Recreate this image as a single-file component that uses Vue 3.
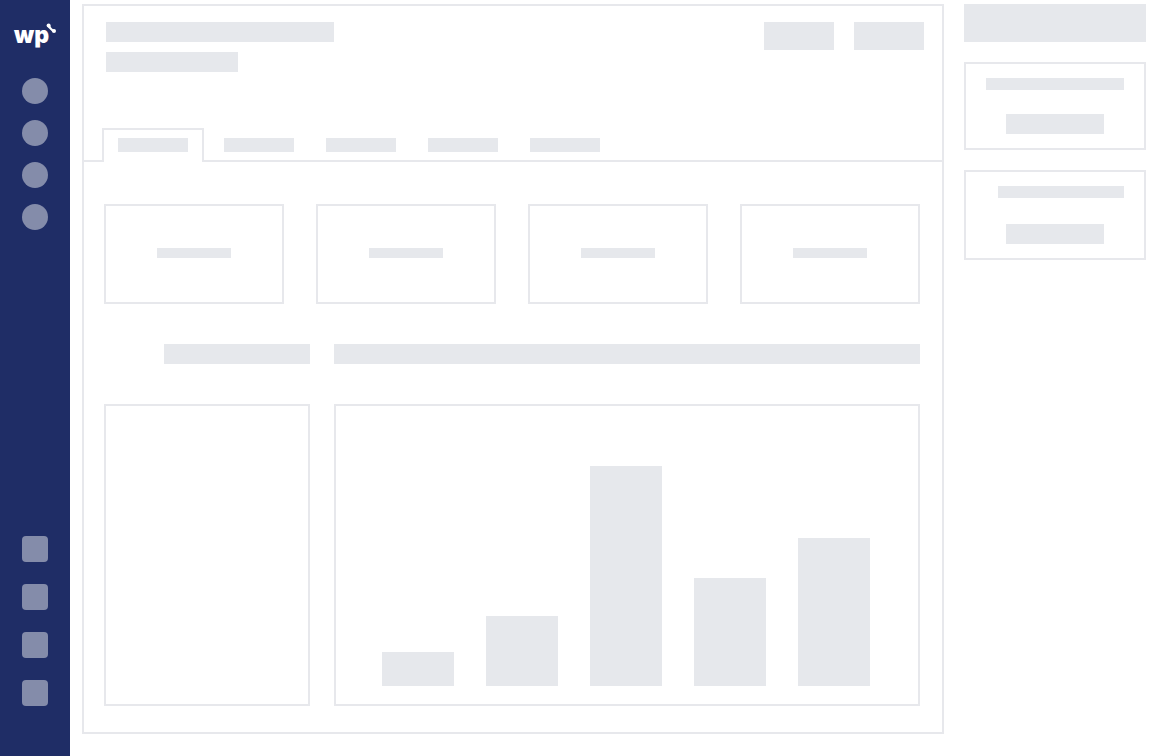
<script setup>
const tabs = [0, 1, 2, 3, 4]
const bars = [34, 70, 220, 108, 148]
</script>

<template>
  <div class="layout" aria-busy="true">
    <nav class="sidebar">
      <svg class="logo" viewBox="0 0 46 32" role="img" aria-label="wp">
        <text x="2" y="23" class="logo-text">wp</text>
        <path d="M35.8 7.2 L40.9 12.2 L42.4 9.8 Q39.4 9 38 5.2 Z" fill="#fff" />
        <circle cx="36.6" cy="5.6" r="2" fill="#fff" />
        <circle cx="42" cy="11" r="2" fill="#fff" />
      </svg>
      <ul class="menu">
        <li v-for="n in 4" :key="n" class="dot"></li>
      </ul>
      <ul class="menu tools">
        <li v-for="n in 4" :key="n" class="square"></li>
      </ul>
    </nav>

    <main class="main">
      <header class="header">
        <div class="titles">
          <div class="fill title"></div>
          <div class="fill subtitle"></div>
        </div>
        <div class="actions">
          <div class="fill action"></div>
          <div class="fill action"></div>
        </div>
      </header>

      <div class="tabs">
        <div v-for="t in tabs" :key="t" class="tab" :class="{ active: t === 0 }">
          <div class="fill tab-label"></div>
        </div>
      </div>

      <div class="content">
        <section class="cards">
          <div v-for="n in 4" :key="n" class="box card">
            <div class="fill card-label"></div>
          </div>
        </section>
        <section class="columns">
          <div class="fill heading short"></div>
          <div class="fill heading"></div>
          <div class="box panel"></div>
          <div class="box panel chart">
            <div v-for="(h, i) in bars" :key="i" class="fill bar" :style="{ height: h + 'px' }"></div>
          </div>
        </section>
      </div>
    </main>

    <aside class="aside">
      <div class="fill banner"></div>
      <div class="box widget">
        <div class="fill line"></div>
        <div class="fill cta"></div>
      </div>
      <div class="box widget second">
        <div class="fill line"></div>
        <div class="fill cta"></div>
      </div>
    </aside>
  </div>
</template>

<style>
body {
  margin: 0;
  background: #fff;
}
</style>

<style scoped>
.layout,
.layout * {
  box-sizing: border-box;
}
.layout {
  display: flex;
  min-height: 100vh;
  padding-right: 18px;
  font-family: Inter, "Liberation Sans", sans-serif;
}
.fill {
  background: #e6e8ec;
}
.box {
  border: 2px solid #e7e8ec;
}
.sidebar {
  display: flex;
  flex-direction: column;
  align-items: center;
  flex: none;
  width: 70px;
  padding: 20px 0 50px;
  background: #1f2d66;
}
.logo {
  display: block;
  width: 46px;
  height: 32px;
  margin-bottom: 26px;
}
.logo-text {
  font-size: 23px;
  font-weight: 900;
  fill: #fff;
}
.menu {
  display: flex;
  flex-direction: column;
  gap: 16px;
  margin: 0;
  padding: 0;
  list-style: none;
}
.tools {
  gap: 22px;
  margin-top: auto;
}
.dot,
.square {
  width: 26px;
  height: 26px;
  background: #848caa;
  border-radius: 50%;
}
.square {
  border-radius: 4px;
}
.main {
  flex: 1;
  min-width: 0;
  margin: 4px 20px 22px 12px;
  border: 2px solid #e7e8ec;
}
.header {
  display: flex;
  justify-content: space-between;
  padding: 16px 18px 56px 22px;
}
.titles {
  display: flex;
  flex-direction: column;
  gap: 10px;
}
.title {
  width: 228px;
  height: 20px;
}
.subtitle {
  width: 132px;
  height: 20px;
}
.actions {
  display: flex;
  gap: 20px;
}
.action {
  width: 70px;
  height: 28px;
}
.tabs {
  display: flex;
  padding-left: 18px;
  border-bottom: 2px solid #e7e8ec;
}
.tab {
  padding: 10px 16px 8px;
}
.tab.active {
  margin: 0 4px -2px 0;
  padding: 8px 14px 10px;
  border: 2px solid #e7e8ec;
  border-bottom: 0;
  background: #fff;
}
.tab-label {
  width: 70px;
  height: 14px;
}
.content {
  padding: 42px 22px 26px 20px;
}
.cards {
  display: grid;
  grid-template-columns: repeat(4, 1fr);
  gap: 32px;
}
.card {
  height: 100px;
  padding-top: 42px;
}
.card-label {
  width: 74px;
  height: 10px;
  margin: 0 auto;
}
.columns {
  display: grid;
  grid-template-columns: 206px 1fr;
  gap: 40px 24px;
  margin-top: 40px;
}
.heading {
  height: 20px;
}
.short {
  width: 146px;
  justify-self: end;
}
.panel {
  height: 302px;
}
.chart {
  display: flex;
  align-items: flex-end;
  gap: 32px;
  padding: 18px 48px 18px 46px;
}
.bar {
  flex: 1;
}
.aside {
  display: flex;
  flex-direction: column;
  gap: 20px;
  flex: none;
  width: 182px;
  padding-top: 4px;
}
.banner {
  height: 38px;
}
.widget {
  display: flex;
  flex-direction: column;
  align-items: center;
  gap: 24px;
  padding: 14px 20px;
}
.line {
  width: 100%;
  height: 12px;
}
.second {
  gap: 26px;
}
.second .line {
  width: 126px;
  align-self: flex-end;
}
.cta {
  width: 98px;
  height: 20px;
}
</style>
